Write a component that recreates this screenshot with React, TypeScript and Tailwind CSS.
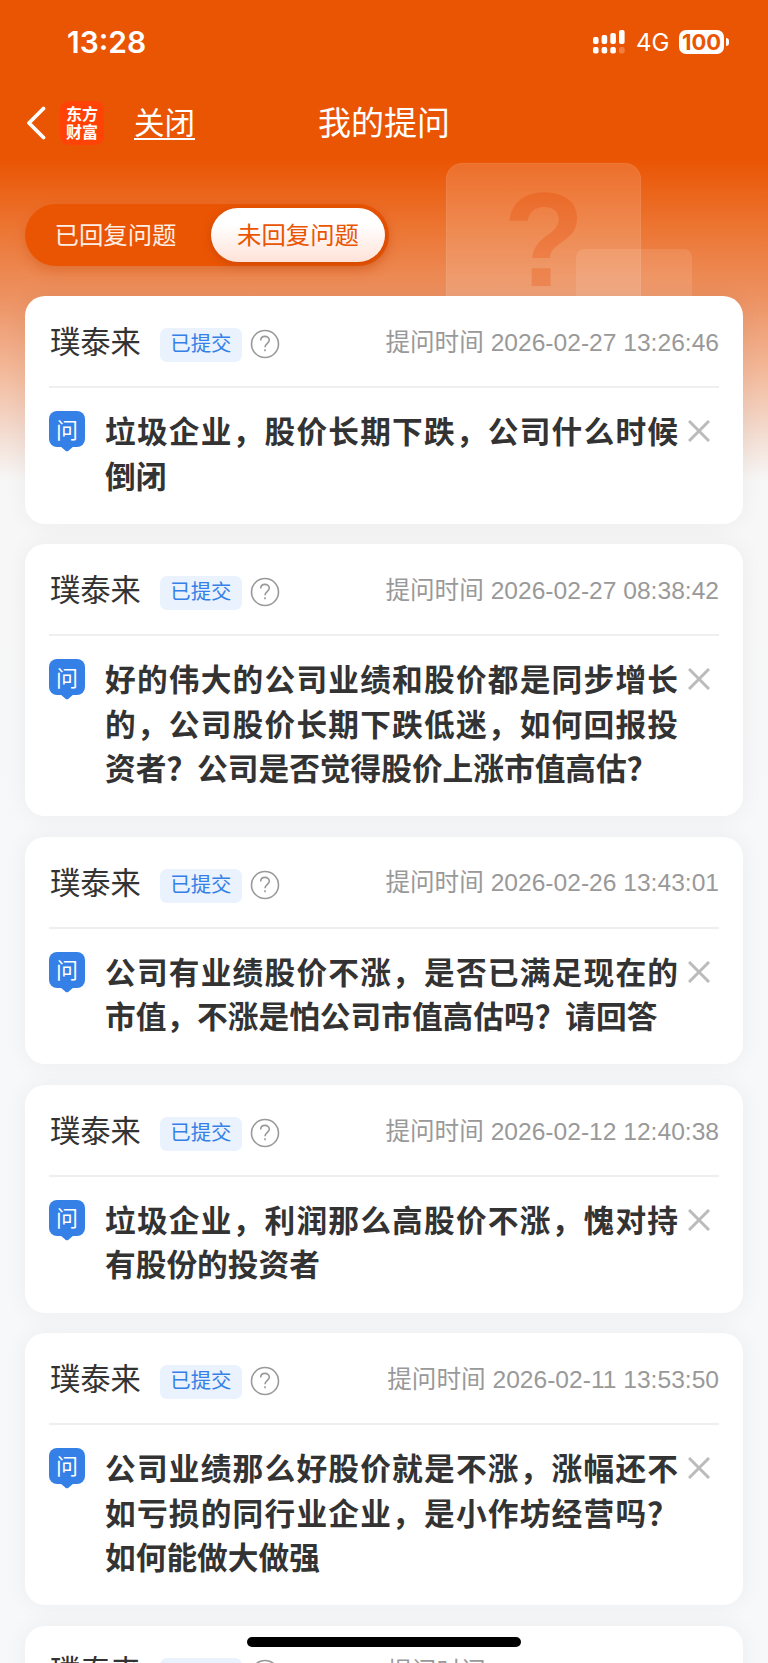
interface Question {
  company: string
  time: string
  text: string
}

const questions: Question[] = [
  { company: "璞泰来", time: "2026-02-27 13:26:46", text: "垃圾企业，股价长期下跌，公司什么时候倒闭" },
  {
    company: "璞泰来",
    time: "2026-02-27 08:38:42",
    text: "好的伟大的公司业绩和股价都是同步增长的，公司股价长期下跌低迷，如何回报投资者？公司是否觉得股价上涨市值高估？",
  },
  {
    company: "璞泰来",
    time: "2026-02-26 13:43:01",
    text: "公司有业绩股价不涨，是否已满足现在的市值，不涨是怕公司市值高估吗？请回答",
  },
  {
    company: "璞泰来",
    time: "2026-02-12 12:40:38",
    text: "垃圾企业，利润那么高股价不涨，愧对持有股份的投资者",
  },
  {
    company: "璞泰来",
    time: "2026-02-11 13:53:50",
    text: "公司业绩那么好股价就是不涨，涨幅还不如亏损的同行业企业，是小作坊经营吗？如何能做大做强",
  },
  { company: "璞泰来", time: "2026-02-11 13:50:26", text: "公司股价长期下跌" },
]

function StatusBar() {
  return (
    <div className="flex h-[84px] items-center justify-between pl-[67px] pr-[39px] font-['Inter',sans-serif] text-white">
      <span className="text-[30px] font-semibold leading-none">13:28</span>
      <div className="flex items-center">
        <svg width="32" height="24" viewBox="0 0 32 24" fill="currentColor">
          <rect x="0" y="7" width="5.6" height="7" rx="2" />
          <rect x="8.6" y="5" width="5.6" height="9" rx="2" />
          <rect x="17.3" y="3" width="5.6" height="11" rx="2" />
          <rect x="26" y="0" width="5.6" height="14" rx="2" />
          <rect x="0" y="17" width="5.6" height="6.5" rx="2" />
          <rect x="8.6" y="17" width="5.6" height="6.5" rx="2" />
          <rect x="17.3" y="17" width="5.6" height="6.5" rx="2" />
          <rect x="26" y="17" width="5.6" height="6.5" rx="2" opacity="0.25" />
        </svg>
        <span className="ml-[11px] w-[43px] pt-[2px] text-[24px] leading-none">4G</span>
        <span className="flex h-[24px] w-[45px] items-center justify-center rounded-[7px] bg-white text-[22px] font-bold leading-none text-[#ea5504]">
          100
        </span>
        <span className="ml-[2px] h-[8px] w-[3px] rounded-r-full bg-white" />
      </div>
    </div>
  )
}

function NavBar() {
  return (
    <div className="grid h-[80px] grid-cols-3 items-center pb-[3px] text-white">
      <div className="flex items-center pl-[26px]">
        <svg
          width="20"
          height="34"
          viewBox="0 0 20 34"
          fill="none"
          stroke="currentColor"
          strokeWidth="3.8"
          strokeLinecap="round"
          strokeLinejoin="round"
        >
          <path d="M17.5 2.5L3 17L17.5 31.5" />
        </svg>
        <div className="ml-[14px] flex h-[44px] w-[44px] flex-col items-center justify-center rounded-[9px] bg-[#ff4206] pb-[2px] text-[16px] font-bold">
          <span className="h-[18px] leading-[18px]">东方</span>
          <span className="h-[18px] leading-[18px]">财富</span>
        </div>
        <a className="ml-[30px] border-b-2 border-white text-[30.5px] leading-[33px]">关闭</a>
      </div>
      <h1 className="pb-[2px] text-center text-[33px] leading-none">我的提问</h1>
    </div>
  )
}

function Tabs() {
  return (
    <div className="relative ml-[25px] flex h-[62px] w-[364px] items-center rounded-full bg-[#ea5504] p-1 shadow-[0_6px_12px_rgba(200,70,0,0.3)]">
      <button className="w-[182px] pb-[2px] pr-[9px] text-[24.4px] text-[#ffeee2]">已回复问题</button>
      <button className="h-[54px] w-[174px] rounded-full bg-linear-to-b from-white from-30% to-[#ffe2d8] pb-[2px] text-[24.4px] text-[#ea5504] shadow-[0_2px_10px_rgba(160,50,0,0.4)]">
        未回复问题
      </button>
    </div>
  )
}

function QuestionCard({ question }: { question: Question }) {
  return (
    <div className="relative h-fit rounded-[20px] bg-white px-6 pb-[25.5px] shadow-[0_0_24px_rgba(0,0,0,0.05)]">
      <div className="flex h-[92px] items-center border-b-2 border-[#efefef]">
        <span className="ml-px pb-[2px] text-[30.3px] leading-none text-[#333]">{question.company}</span>
        <span className="ml-[19px] mt-[8px] flex h-[34px] w-[82px] items-center justify-center rounded-[7px] bg-[#e9f2fd] pb-[5px] text-[20.4px] leading-none text-[#3480e6]">
          已提交
        </span>
        <svg className="ml-[8px] mt-[6px]" width="30" height="30" viewBox="0 0 30 30" fill="none" stroke="#999" strokeWidth="1.6">
          <circle cx="15" cy="15" r="13.5" />
          <path d="M10.7 11.6C10.7 5.9 19.3 6.1 19.3 11.3C19.3 14.3 15 14.4 15 18.3" />
          <path d="M15 20.2V22.2" />
        </svg>
        <span className="ml-auto pt-[4px] font-['Liberation_Sans','Noto_Sans_CJK_SC',sans-serif] text-[24.6px] leading-none text-[#999]">
          提问时间 {question.time}
        </span>
      </div>
      <div className="flex pt-[21px]">
        <div className="relative mt-[2px] flex h-[36px] w-[36px] shrink-0 items-center justify-center rounded-[8px] bg-[#3480e6] pb-[3px] text-[22px] leading-none text-white">
          问
          <svg className="absolute left-[11px] top-[35px]" width="14" height="6" viewBox="0 0 14 6" fill="#3480e6">
            <path d="M0 0H14L8.5 4.7Q7 6 5.5 4.7Z" />
          </svg>
        </div>
        <p className="-mt-px mb-px ml-[20px] w-[573px] shrink-0 text-justify text-[30.7px] font-bold leading-[44.6px] text-[#333]">
          {question.text}
        </p>
        <svg className="ml-[10px] mt-[11px] shrink-0" width="22" height="22" viewBox="0 0 22 22" stroke="#bbb" strokeWidth="3">
          <path d="M1 1L21 21M21 1L1 21" />
        </svg>
      </div>
    </div>
  )
}

export default function App() {
  return (
    <div className="relative h-[1663px] w-[768px] overflow-hidden bg-[linear-gradient(180deg,#ea5504_0px,#ea5504_160px,#ec7634_230px,#ed9363_300px,#f3b899_370px,#f3dacd_430px,#f7f7f7_480px,#f7f8fa_900px)] font-['Noto_Sans_CJK_SC',sans-serif]">
      {/* Decorative cards behind the list */}
      <div className="absolute left-[446px] top-[163px] h-[160px] w-[195px] rounded-[16px] border border-white/5 bg-white/15" />
      <span className="absolute left-[503px] top-[173px] bg-linear-to-b from-[#ea6118] to-[#ee8853] bg-clip-text font-['Liberation_Sans',sans-serif] text-[134px] font-bold leading-[134px] text-transparent opacity-80">
        ?
      </span>
      <div className="absolute left-[576px] top-[249px] h-[80px] w-[116px] rounded-[8px] bg-white/10" />

      <StatusBar />
      <NavBar />
      <div className="pt-[40px]">
        <Tabs />
      </div>
      <div className="flex flex-col gap-[20.4px] px-[25px] pt-[30px]">
        {questions.map((question) => (
          <QuestionCard key={question.time} question={question} />
        ))}
      </div>

      {/* Home indicator */}
      <div className="absolute left-[247px] top-[1637px] h-[10px] w-[274px] rounded-full bg-black" />
    </div>
  )
}
